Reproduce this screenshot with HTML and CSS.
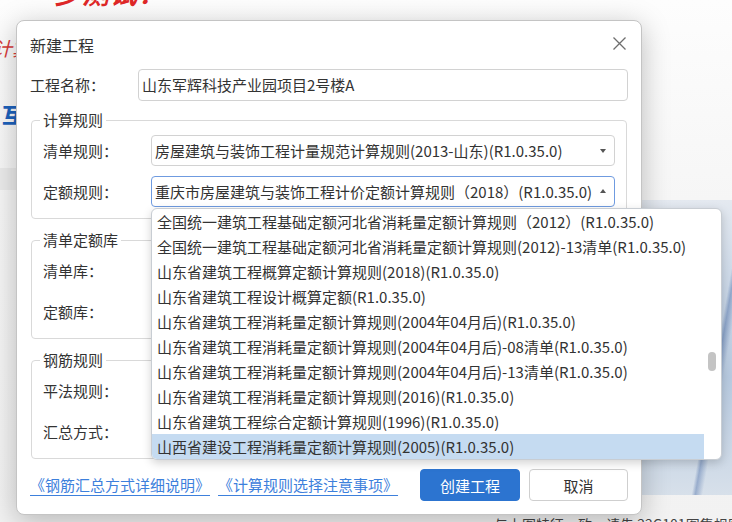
FILE: index.html
```html
<!DOCTYPE html>
<html lang="zh-CN">
<head>
<meta charset="utf-8">
<title>新建工程</title>
<link rel="stylesheet" href="styles.css">
</head>
<body>
<div class="desk">
  <div class="bg-red-top">一步测试！</div>
  <div class="bg-red-mid">计算</div>
  <div class="bg-blue">互</div>
  <div class="bg-band"></div>
  <div class="bg-image"></div>
  <div class="bg-bottom">与上图特征一致，请先 22G101图集规则说明</div>
</div>

<div class="dialog">
  <div class="dlg-head">
    <span class="dlg-title">新建工程</span>
    <svg class="close" width="13" height="13" viewBox="0 0 13 13"><path d="M0.5 0.5 L12.5 12.5 M12.5 0.5 L0.5 12.5" stroke="#6e6e6e" stroke-width="1.3" fill="none"/></svg>
  </div>
  <div class="name-row">
    <span class="label">工程名称：</span>
    <div class="input">山东军辉科技产业园项目2号楼A</div>
  </div>

  <fieldset class="group">
    <legend>计算规则</legend>
    <div class="row">
      <span class="label">清单规则：</span>
      <div class="select"><span class="val">房屋建筑与装饰工程计量规范计算规则(2013-山东)(R1.0.35.0)</span><i class="caret down"></i></div>
    </div>
    <div class="row">
      <span class="label">定额规则：</span>
      <div class="select focus"><span class="val">重庆市房屋建筑与装饰工程计价定额计算规则（2018）(R1.0.35.0)</span><i class="caret up"></i></div>
    </div>
  </fieldset>

  <fieldset class="group">
    <legend>清单定额库</legend>
    <div class="row">
      <span class="label">清单库：</span>
      <div class="select"><span class="val"></span><i class="caret down"></i></div>
    </div>
    <div class="row">
      <span class="label">定额库：</span>
      <div class="select"><span class="val"></span><i class="caret down"></i></div>
    </div>
  </fieldset>

  <fieldset class="group">
    <legend>钢筋规则</legend>
    <div class="row">
      <span class="label">平法规则：</span>
      <div class="select"><span class="val"></span><i class="caret down"></i></div>
    </div>
    <div class="row">
      <span class="label">汇总方式：</span>
      <div class="select"><span class="val"></span><i class="caret down"></i></div>
    </div>
  </fieldset>

  <div class="footer">
    <a class="link">《钢筋汇总方式详细说明》</a>
    <a class="link">《计算规则选择注意事项》</a>
    <span class="spacer"></span>
    <button class="btn primary">创建工程</button>
    <button class="btn">取消</button>
  </div>
</div>

<div class="dropdown">
  <ul class="items">
    <li>全国统一建筑工程基础定额河北省消耗量定额计算规则（2012）(R1.0.35.0)</li>
    <li>全国统一建筑工程基础定额河北省消耗量定额计算规则(2012)-13清单(R1.0.35.0)</li>
    <li>山东省建筑工程概算定额计算规则(2018)(R1.0.35.0)</li>
    <li>山东省建筑工程设计概算定额(R1.0.35.0)</li>
    <li>山东省建筑工程消耗量定额计算规则(2004年04月后)(R1.0.35.0)</li>
    <li>山东省建筑工程消耗量定额计算规则(2004年04月后)-08清单(R1.0.35.0)</li>
    <li>山东省建筑工程消耗量定额计算规则(2004年04月后)-13清单(R1.0.35.0)</li>
    <li>山东省建筑工程消耗量定额计算规则(2016)(R1.0.35.0)</li>
    <li>山东省建筑工程综合定额计算规则(1996)(R1.0.35.0)</li>
    <li class="sel">山西省建设工程消耗量定额计算规则(2005)(R1.0.35.0)</li>
  </ul>
  <div class="scroll"><div class="thumb"></div></div>
</div>
</body>
</html>
```

FILE: styles.css
```css
* { box-sizing: border-box; }

html, body {
  margin: 0;
  padding: 0;
}

body {
  width: 732px;
  height: 522px;
  overflow: hidden;
  position: relative;
  background: #f7f7f7;
  font-family: "Noto Sans CJK SC", "Noto Sans", sans-serif;
  color: #333;
}

/* ---------- desktop behind the dialog ---------- */
.desk {
  position: absolute;
  inset: 0;
  background: linear-gradient(#fdfdfd 0, #f6f6f6 200px, #f2f2f2 100%);
}

.bg-red-top {
  position: absolute;
  left: 26px;
  top: -27px;
  font-size: 27px;
  font-weight: 700;
  font-style: italic;
  color: #e02828;
  letter-spacing: 1px;
}

.bg-red-mid {
  position: absolute;
  left: -7px;
  top: 34px;
  font-size: 19px;
  font-style: italic;
  color: #d83a3a;
}

.bg-blue {
  position: absolute;
  left: 2px;
  top: 100px;
  font-size: 20px;
  font-weight: 900;
  color: #1d62bd;
}

.bg-band {
  position: absolute;
  left: 0;
  top: 168px;
  width: 20px;
  height: 22px;
  background: #ebebeb;
}

.bg-image {
  position: absolute;
  left: 600px;
  top: 200px;
  width: 132px;
  height: 295px;
  background:
    linear-gradient(100deg, transparent 0 78%, rgba(40,80,150,.35) 80%, transparent 84%),
    linear-gradient(180deg, #e4e9f0 0, #c9d6e6 30%, #b7c9df 60%, #d7e0ea 100%);
}

.bg-bottom {
  position: absolute;
  left: 494px;
  top: 514px;
  font-size: 14px;
  color: #444;
  white-space: nowrap;
}

/* ---------- dialog ---------- */
.dialog {
  position: absolute;
  left: 16px;
  top: 20px;
  width: 626px;
  height: 495px;
  padding: 0 13px 13px;
  background: #fff;
  border: 1px solid #c4c4c4;
  border-radius: 8px;
  box-shadow: 0 6px 28px rgba(0, 0, 0, 0.25);
  display: flex;
  flex-direction: column;
}

.dlg-head {
  height: 48px;
  display: flex;
  align-items: center;
  justify-content: space-between;
}

.dlg-title {
  font-size: 16px;
  line-height: 20px;
  color: #333;
}

.close {
  margin-right: 2px;
  margin-bottom: 4px;
}

.label {
  width: 108px;
  flex: none;
  font-size: 15px;
  line-height: 20px;
  color: #333;
}

.name-row {
  height: 32px;
  display: flex;
  align-items: center;
}

.input {
  flex: 1;
  height: 32px;
  border: 1px solid #d2d2d2;
  border-radius: 4px;
  padding: 0 3px;
  font-size: 15px;
  line-height: 30px;
  color: #333;
  white-space: nowrap;
}

.group {
  margin: 9px 1px 0;
  padding: 5px 11px 11px;
  border: 1px solid #d9d9d9;
  border-radius: 4px;
  min-width: 0;
  display: flex;
  flex-direction: column;
  gap: 10px;
}

.group + .group {
  margin-top: 11px;
}

.group legend {
  padding: 0 3px;
  margin-left: -3px;
  font-size: 15px;
  line-height: 20px;
  color: #333;
}

.row {
  height: 31px;
  display: flex;
  align-items: center;
}

.select {
  flex: 1;
  height: 31px;
  border: 1px solid #d2d2d2;
  border-radius: 4px;
  padding: 0 8px 0 3px;
  display: flex;
  align-items: center;
  justify-content: space-between;
  background: #fff;
}

.select.focus {
  border-color: #6f9be0;
}

.val {
  font-size: 15px;
  line-height: 20px;
  color: #333;
  white-space: nowrap;
}

.caret {
  width: 0;
  height: 0;
  border-left: 3.5px solid transparent;
  border-right: 3.5px solid transparent;
}

.caret.down {
  border-top: 4px solid #555;
  margin-top: 1px;
}

.caret.up {
  border-bottom: 4px solid #555;
  margin-bottom: 1px;
}

/* ---------- footer ---------- */
.footer {
  margin-top: 10px;
  height: 32px;
  display: flex;
  align-items: center;
  gap: 8px;
}

.link {
  font-size: 15px;
  line-height: 20px;
  color: #3d80dc;
  text-decoration: underline;
  text-underline-offset: 4px;
  text-decoration-thickness: 1px;
  white-space: nowrap;
}

.spacer {
  flex: 1;
}

.btn {
  width: 99px;
  height: 32px;
  border: 1px solid #cfcfcf;
  border-radius: 4px;
  background: #fff;
  font-family: inherit;
  font-size: 15px;
  color: #333;
  padding: 0;
  margin-left: 1px;
}

.btn.primary {
  width: 100px;
  background: #2c74d0;
  border-color: #2c74d0;
  color: #fff;
}

/* ---------- dropdown list (overlay) ---------- */
.dropdown {
  position: absolute;
  left: 151px;
  top: 208px;
  width: 571px;
  height: 252px;
  background: #fff;
  border: 1px solid #c8cdd3;
  border-radius: 6px;
  box-shadow: 0 3px 10px rgba(0, 0, 0, 0.18);
  display: flex;
  overflow: hidden;
}

.items {
  list-style: none;
  margin: 0;
  padding: 0;
  flex: 1;
}

.items li {
  height: 25px;
  padding-left: 5px;
  font-size: 15px;
  line-height: 25px;
  color: #333;
  white-space: nowrap;
}

.items li.sel {
  background: #c5dbf1;
}

.scroll {
  width: 17px;
  flex: none;
  padding-top: 143px;
  padding-left: 4px;
}

.thumb {
  width: 8px;
  height: 19px;
  border-radius: 4px;
  background: #c4c4c4;
}
```
